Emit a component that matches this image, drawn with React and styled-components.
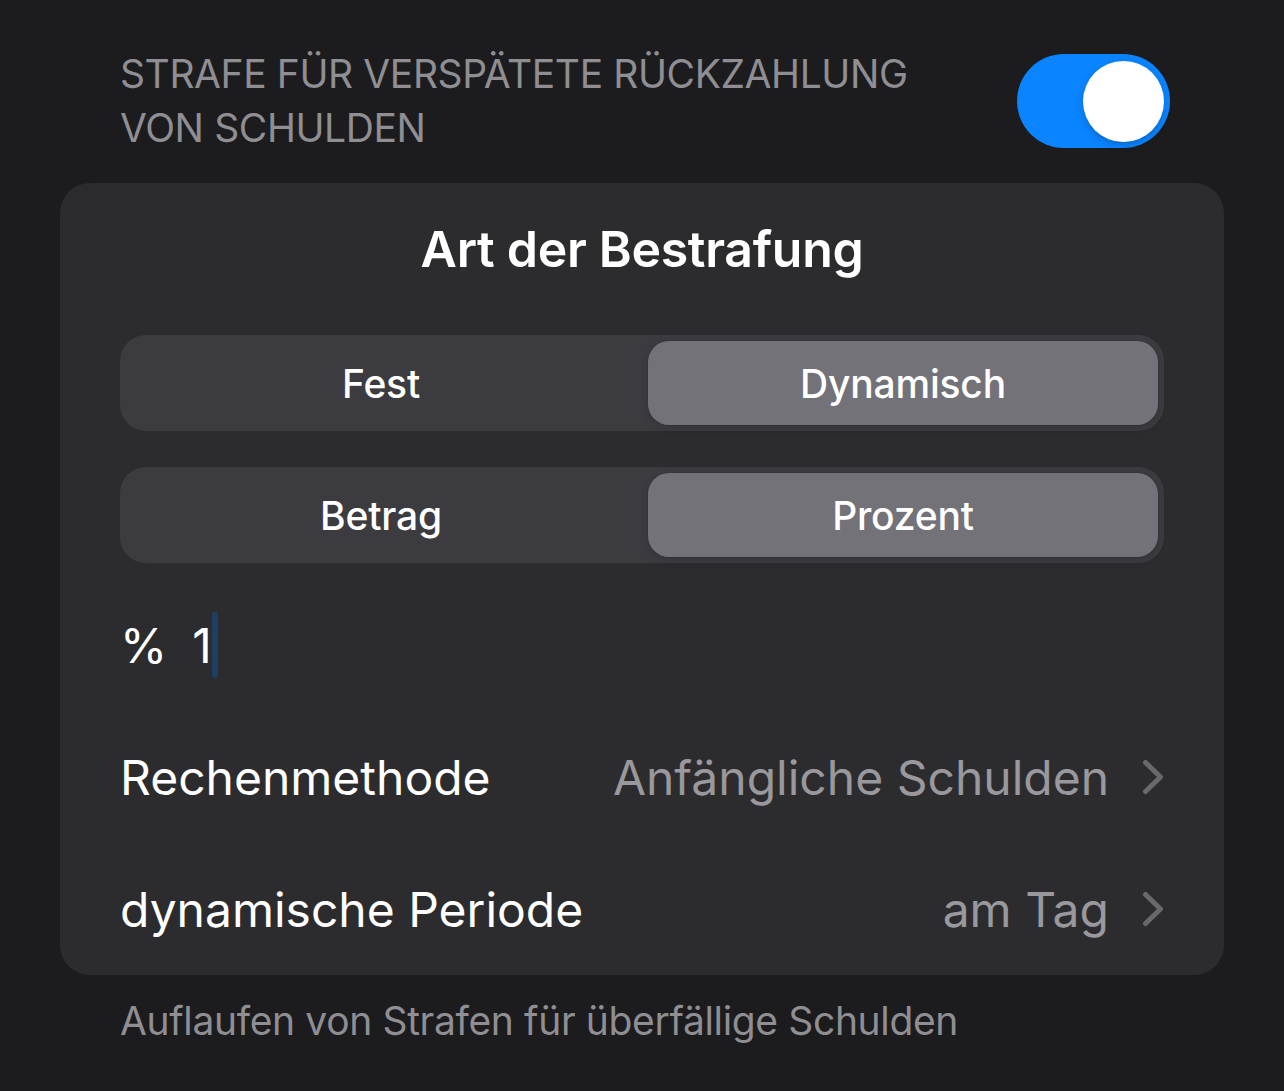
import React, { useState } from "react";
import styled, { createGlobalStyle } from "styled-components";

const GlobalStyle = createGlobalStyle`
  html, body {
    margin: 0;
    padding: 0;
    background: #1c1c1e;
  }
  body {
    font-family: Inter, "Noto Sans", "Liberation Sans", sans-serif;
    -webkit-font-smoothing: antialiased;
  }
`;

const Page = styled.div`
  width: 1284px;
  min-height: 1091px;
  background: #1c1c1e;
  display: flex;
  flex-direction: column;
`;

const SettingRow = styled.div`
  display: flex;
  align-items: center;
  justify-content: space-between;
  padding: 47px 114px 28px 120px;
`;

const SectionLabel = styled.div`
  max-width: 820px;
  font-size: 39px;
  line-height: 54px;
  color: #8e8e93;
  text-transform: uppercase;
  letter-spacing: -0.4px;
`;

const Switch = styled.button`
  width: 153px;
  height: 94px;
  border: none;
  border-radius: 47px;
  padding: 0 6px;
  display: flex;
  align-items: center;
  justify-content: ${(p) => (p.on ? "flex-end" : "flex-start")};
  background: ${(p) => (p.on ? "#0a84ff" : "#39393d")};
  cursor: pointer;
  flex-shrink: 0;
`;

const Knob = styled.span`
  width: 81px;
  height: 81px;
  border-radius: 50%;
  background: #ffffff;
  box-shadow: 0 3px 8px rgba(0, 0, 0, 0.15), 0 3px 1px rgba(0, 0, 0, 0.06);
`;

const Card = styled.div`
  margin: 0 60px;
  background: #2c2c2e;
  border-radius: 30px;
  padding: 36px 60px 0;
  display: flex;
  flex-direction: column;
`;

const CardTitle = styled.div`
  text-align: center;
  font-size: 50px;
  line-height: 60px;
  font-weight: 600;
  letter-spacing: -0.3px;
  color: #ffffff;
  margin-bottom: 56px;
`;

const Segmented = styled.div`
  display: grid;
  grid-template-columns: 1fr 1fr;
  gap: 12px;
  padding: 6px;
  height: 96px;
  box-sizing: border-box;
  border-radius: 26px;
  background: #3c3b40;
  margin-bottom: ${(p) => p.spacing || 0}px;
`;

const Segment = styled.button`
  border: none;
  border-radius: 21px;
  background: ${(p) => (p.active ? "#737278" : "transparent")};
  box-shadow: ${(p) => (p.active ? "0 0 0 1px rgba(0,0,0,0.06), 0 3px 8px rgba(0,0,0,0.12)" : "none")};
  color: #ffffff;
  font-family: inherit;
  font-size: 39px;
  font-weight: 500;
  letter-spacing: -0.2px;
  cursor: pointer;
`;

const InputRow = styled.div`
  display: flex;
  align-items: center;
  height: 132px;
  margin-top: 16px;
  font-size: 48px;
  color: #ffffff;
`;

const Unit = styled.span`
  margin-right: 25px;
`;

const Caret = styled.span`
  display: inline-block;
  width: 6px;
  height: 66px;
  border-radius: 3px;
  background: #1d3f62;
`;

const ListRow = styled.div`
  display: flex;
  align-items: center;
  height: 132px;
`;

const RowLabel = styled.div`
  flex: 1;
  font-size: 48px;
  color: #ffffff;
`;

const RowValue = styled.div`
  font-size: 48px;
  color: #98989d;
  margin-right: 33px;
`;

const Footer = styled.div`
  padding: 22px 120px 0;
  font-size: 39px;
  line-height: 48px;
  letter-spacing: -0.35px;
  color: #8e8e93;
`;

const Chevron = () => (
  <svg width="22" height="36" viewBox="0 0 22 36" fill="none">
    <path
      d="M3.5 3.5 L18.5 18 L3.5 32.5"
      stroke="#68686d"
      strokeWidth="5"
      strokeLinecap="round"
      strokeLinejoin="round"
    />
  </svg>
);

export default function App() {
  const [enabled, setEnabled] = useState(true);
  const [kind, setKind] = useState("dynamic");
  const [mode, setMode] = useState("percent");

  return (
    <Page>
      <GlobalStyle />
      <SettingRow>
        <SectionLabel>Strafe für verspätete Rückzahlung von Schulden</SectionLabel>
        <Switch on={enabled ? 1 : 0} onClick={() => setEnabled(!enabled)}>
          <Knob />
        </Switch>
      </SettingRow>
      <Card>
        <CardTitle>Art der Bestrafung</CardTitle>
        <Segmented spacing={36}>
          <Segment active={kind === "fixed"} onClick={() => setKind("fixed")}>
            Fest
          </Segment>
          <Segment active={kind === "dynamic"} onClick={() => setKind("dynamic")}>
            Dynamisch
          </Segment>
        </Segmented>
        <Segmented>
          <Segment active={mode === "amount"} onClick={() => setMode("amount")}>
            Betrag
          </Segment>
          <Segment active={mode === "percent"} onClick={() => setMode("percent")}>
            Prozent
          </Segment>
        </Segmented>
        <InputRow>
          <Unit>%</Unit>
          <span>1</span>
          <Caret />
        </InputRow>
        <ListRow>
          <RowLabel>Rechenmethode</RowLabel>
          <RowValue>Anfängliche Schulden</RowValue>
          <Chevron />
        </ListRow>
        <ListRow>
          <RowLabel>dynamische Periode</RowLabel>
          <RowValue>am Tag</RowValue>
          <Chevron />
        </ListRow>
      </Card>
      <Footer>Auflaufen von Strafen für überfällige Schulden</Footer>
    </Page>
  );
}
